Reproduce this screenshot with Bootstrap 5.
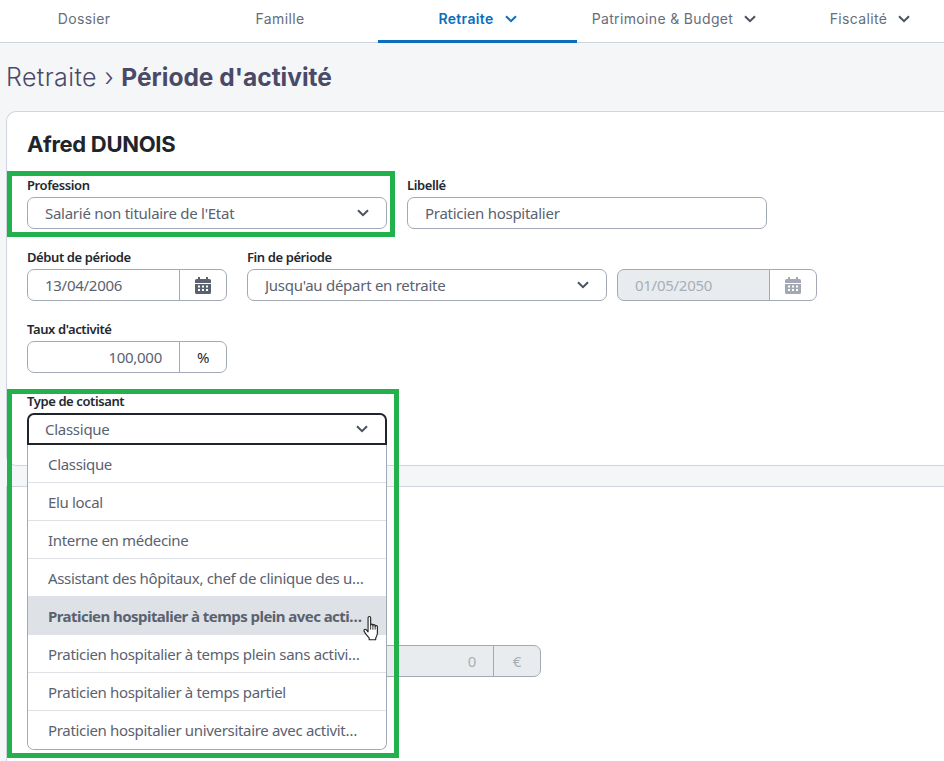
<!DOCTYPE html>
<html lang="fr">
<head>
<meta charset="utf-8">
<title>Période d'activité</title>
<link rel="stylesheet" href="https://cdn.jsdelivr.net/npm/bootstrap@5.3.0/dist/css/bootstrap.min.css">
<style>
html,body{height:761px;overflow:hidden}
body{background:#f5f6f8;font-family:"Noto Sans",sans-serif;font-size:15px;color:#5a6270}
.pg{position:relative;width:944px;height:761px;overflow:hidden}
.topnav{height:43px;background:#fff;border-bottom:1px solid #cfd4de;margin-left:-14px;width:1000px}
.tabx{height:43px;display:flex;align-items:center;justify-content:center;gap:11px;font-family:Inter,sans-serif;font-size:14px;letter-spacing:.35px;color:#666d7b;text-decoration:none;flex:none;padding-bottom:6px}
.tabx:nth-child(1){width:196px}.tabx:nth-child(2){width:196px}.tabx:nth-child(3){width:199px}.tabx:nth-child(4){width:194px}.tabx:nth-child(5){width:198px}
.tabx.on{color:#0a6ebd;font-weight:600;border-bottom:3px solid #0a6ebd;padding-bottom:3px}
.crumb{font-family:Inter,sans-serif;font-size:25px;line-height:34px;color:#4a4a68;font-weight:300;margin:17px 0 17px 6px;letter-spacing:.4px}
.crumb b{font-weight:700;font-size:24.5px;letter-spacing:0}
.sheet{background:#fff;border:1px solid #cfd4de;border-right:0;margin-left:6px;width:1000px;padding:16px 20px 0}
.sheet-a{border-radius:10px 0 0 10px;height:355px}
.sheet-b{margin-top:20px;height:300px;border-bottom:0;padding-top:158px}
.who{font-family:Inter,sans-serif;font-size:22px;font-weight:700;line-height:33px;color:#20242c;margin:0 0 16px;letter-spacing:-.3px}
.fld{margin-bottom:20px;position:relative}
.lbl{display:block;font-size:13px;font-weight:600;line-height:16px;color:#232830;margin:0;height:20px;letter-spacing:-.4px}
.w360{width:360px}.w200{width:200px}
.duo{column-gap:20px}
.mini{column-gap:10px}
.form-select,.form-control,.input-group-text{height:32px;font-size:15px;border-color:#a2a9b5;color:#5a6270;padding-top:0;padding-bottom:0;background-color:#fff;letter-spacing:-.27px}
.form-select,.form-control{padding-left:17px;border-radius:7px}
.input-group-text{border-radius:7px;justify-content:center;width:48px;padding:0}
.form-select{background-image:url("data:image/svg+xml,%3csvg xmlns='http://www.w3.org/2000/svg' viewBox='0 0 12 8'%3e%3cpath fill='none' stroke='%234a5260' stroke-width='2' d='M1 1.2l5 5 5-5'/%3e%3c/svg%3e");background-size:12px 8px;background-position:right 17px center}
.form-control:disabled{background:#e9ecef;color:#a8aeb8;opacity:1}
.ro{color:#a8aeb8;background:#e9ecef}
.num{text-align:right;padding-right:17px}
.sel-open{border:2px solid #20242c;border-radius:7px 7px 0 0;padding-left:16px}
.sel-open:focus{box-shadow:none;border-color:#20242c}
.pct{color:#232830}
.menu{position:absolute;left:0;top:52px;width:360px;z-index:5;border:1px solid #a2a9b5;border-top:0;border-radius:0 0 7px 7px;background:#fff;overflow:hidden}
.menu .list-group-item{height:38px;line-height:39px;padding:0 21px 0 20px;border-color:#dee2e6;color:#5a6270;letter-spacing:-.33px;font-size:15px;border-left:0;border-right:0;border-radius:0}
.menu .list-group-item:first-child{border-top:0}
.menu .list-group-item:last-child{border-bottom:0}
.menu .list-group-item.hov{background:#dee2e6;font-weight:700;letter-spacing:-.55px}
.euro{width:514px}
.hl{position:absolute;border:5px solid #22b14c;z-index:6;pointer-events:none}
.hl-a{left:7px;top:171px;width:388px;height:66px}
.hl-b{left:7px;top:389px;width:392px;height:369px}
.hand{position:absolute;left:363px;top:615px;z-index:7}
</style>
</head>
<body>
<div class="pg">
  <nav class="topnav d-flex">
    <a class="tabx" href="#">Dossier</a>
    <a class="tabx" href="#">Famille</a>
    <a class="tabx on" href="#">Retraite <svg width="12" height="8" viewBox="0 0 12 8"><path fill="none" stroke="#0a6ebd" stroke-width="2" d="M1 1.2l5 5 5-5"/></svg></a>
    <a class="tabx" href="#">Patrimoine &amp; Budget <svg width="12" height="8" viewBox="0 0 12 8"><path fill="none" stroke="#4a5260" stroke-width="2" d="M1 1.2l5 5 5-5"/></svg></a>
    <a class="tabx" href="#">Fiscalité <svg width="12" height="8" viewBox="0 0 12 8"><path fill="none" stroke="#4a5260" stroke-width="2" d="M1 1.2l5 5 5-5"/></svg></a>
  </nav>
  <h1 class="crumb">Retraite › <b>Période d'activité</b></h1>

  <section class="sheet sheet-a">
    <h2 class="who">Afred DUNOIS</h2>
    <div class="d-flex duo">
      <div class="fld w360"><label class="lbl">Profession</label>
        <select class="form-select"><option>Salarié non titulaire de l'Etat</option></select></div>
      <div class="fld w360"><label class="lbl">Libellé</label>
        <input class="form-control" value="Praticien hospitalier"></div>
    </div>
    <div class="d-flex duo">
      <div class="fld w200"><label class="lbl">Début de période</label>
        <div class="input-group"><input class="form-control" value="13/04/2006">
          <span class="input-group-text"><svg width="16" height="17" viewBox="0 0 16 17"><path fill="#5a6270" d="M3 0h2v2h6V0h2v2h1.500A1.500 1.500 0 0 1 16 3.500V6H0V3.500A1.500 1.500 0 0 1 1.500 2H3zM0 7h16v8.500a1.500 1.500 0 0 1-1.500 1.500h-13A1.500 1.500 0 0 1 0 15.500zm3 1.500v2h2v-2zm4 0v2h2v-2zm4 0v2h2v-2zm-8 3.500v2h2v-2zm4 0v2h2v-2zm4 0v2h2v-2z"/></svg></span></div></div>
      <div class="d-flex mini">
        <div class="fld w360"><label class="lbl">Fin de période</label>
          <select class="form-select"><option>Jusqu'au départ en retraite</option></select></div>
        <div class="fld w200"><label class="lbl">&nbsp;</label>
          <div class="input-group"><input class="form-control" value="01/05/2050" disabled>
            <span class="input-group-text"><svg width="16" height="17" viewBox="0 0 16 17"><path fill="#a2a9b5" d="M3 0h2v2h6V0h2v2h1.500A1.500 1.500 0 0 1 16 3.500V6H0V3.500A1.500 1.500 0 0 1 1.500 2H3zM0 7h16v8.500a1.500 1.500 0 0 1-1.500 1.500h-13A1.500 1.500 0 0 1 0 15.500zm3 1.500v2h2v-2zm4 0v2h2v-2zm4 0v2h2v-2zm-8 3.500v2h2v-2zm4 0v2h2v-2zm4 0v2h2v-2z"/></svg></span></div></div>
      </div>
    </div>
    <div class="fld w200"><label class="lbl">Taux d'activité</label>
      <div class="input-group"><input class="form-control num" value="100,000"><span class="input-group-text pct">%</span></div></div>
    <div class="fld w360"><label class="lbl">Type de cotisant</label>
      <select class="form-select sel-open"><option>Classique</option></select>
      <div class="menu list-group list-group-flush">
        <div class="list-group-item text-truncate">Classique</div>
        <div class="list-group-item text-truncate">Elu local</div>
        <div class="list-group-item text-truncate">Interne en médecine</div>
        <div class="list-group-item text-truncate">Assistant des hôpitaux, chef de clinique des universités</div>
        <div class="list-group-item text-truncate hov">Praticien hospitalier à temps plein avec activité libérale</div>
        <div class="list-group-item text-truncate">Praticien hospitalier à temps plein sans activité libérale</div>
        <div class="list-group-item text-truncate">Praticien hospitalier à temps partiel</div>
        <div class="list-group-item text-truncate">Praticien hospitalier universitaire avec activité libérale</div>
      </div>
    </div>
  </section>

  <section class="sheet sheet-b">
    <div class="input-group euro"><input class="form-control num" value="0" disabled><span class="input-group-text ro">€</span></div>
  </section>

  <div class="hl hl-a"></div>
  <div class="hl hl-b"></div>
  <svg class="hand" width="18" height="27" viewBox="0 0 16 24"><path fill="#fff" stroke="#222" stroke-width="1" stroke-linejoin="round" d="M4.500 2.500c0-1.500 2.300-1.500 2.300 0V9c0-1.200 2-1.200 2 0v.5c0-1.200 2-1.200 2 0v.8c0-1.200 2-1.200 2 0V16c0 2-1 3.500-1.500 4.500v1.500H5.500v-1.500C4 18.500 1.800 16.500 1 14.500c-.6-1.500 1-2.500 2-1.300l1.500 1.800z"/><path fill="none" stroke="#222" stroke-width=".8" d="M6.800 9v4M8.800 9.500V13M10.800 10.300V13"/></svg>
</div>
<script src="https://cdn.jsdelivr.net/npm/bootstrap@5.3.0/dist/js/bootstrap.bundle.min.js"></script>
</body>
</html>
